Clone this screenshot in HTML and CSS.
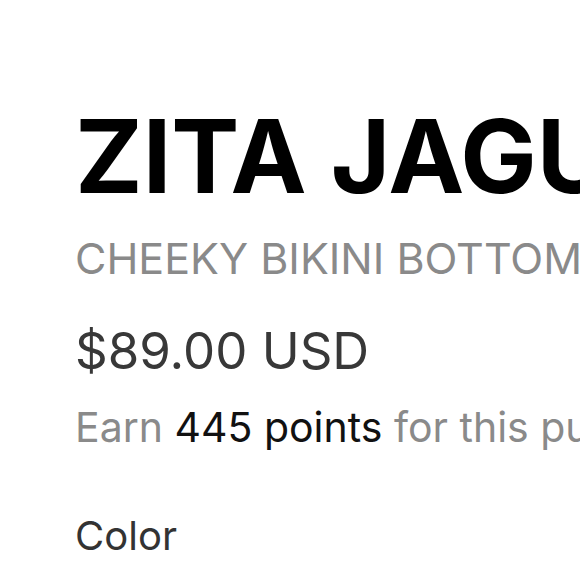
FILE: index.html
```html
<!DOCTYPE html>
<html>
<head>
<meta charset="utf-8">
<link rel="stylesheet" href="styles.css">
</head>
<body>
<main class="product">
  <h1 class="title">ZITA JAGUAR</h1>
  <p class="subtitle">CHEEKY BIKINI BOTTOM</p>
  <p class="price">$89.00 USD</p>
  <p class="points">Earn <span class="points-num">445 points</span> for this purchase</p>
  <p class="label">Color</p>
</main>
</body>
</html>
```
FILE: styles.css
```css
html, body {
  margin: 0;
  padding: 0;
  background: #fff;
  overflow: hidden;
}
.product {
  font-family: Inter, "Noto Sans", sans-serif;
  padding: 0 0 0 75px;
  white-space: nowrap;
}
.title {
  margin: 0;
  padding-top: 100px;
  font-size: 102px;
  font-weight: 700;
  line-height: 112px;
  color: #000;
}
.subtitle {
  margin: 16px 0 0;
  font-size: 43px;
  line-height: 60px;
  color: #8a8a8a;
}
.price {
  margin: 33px 0 0;
  font-size: 51px;
  line-height: 60px;
  color: #383838;
}
.points {
  margin: 16px 0 0;
  font-size: 41px;
  line-height: 60px;
  color: #8a8a8a;
}
.points-num { color: #111; }
.label {
  margin: 49px 0 0;
  font-size: 40px;
  line-height: 60px;
  color: #333;
}
```
